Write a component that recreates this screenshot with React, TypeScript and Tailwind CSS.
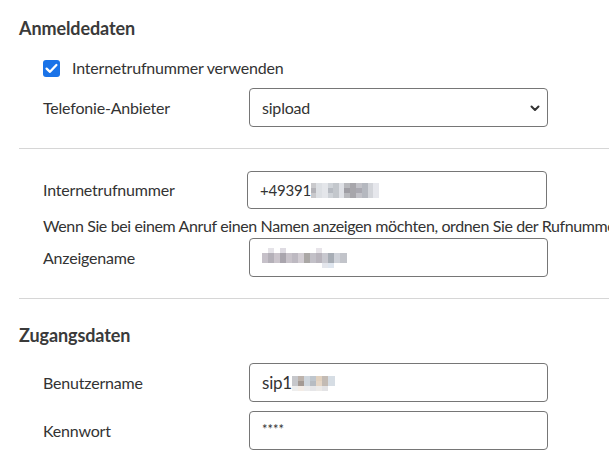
import React from "react";

type Block = [number, number, number, number, string];

function Mosaic({ w, h, cells }: { w: number; h: number; cells: Block[] }) {
  return (
    <svg width={w} height={h} viewBox={`0 0 ${w} ${h}`} className="block">
      {cells.map(([x, y, cw, ch, c], i) => (
        <rect key={i} x={x} y={y} width={cw} height={ch} fill={c} />
      ))}
    </svg>
  );
}

const phoneBlur: Block[] = [
  [0, 0, 5, 15, "#c9c9cc"],
  [5, 0, 6, 15, "#dde0e4"],
  [11, 0, 6, 15, "#e4e6ea"],
  [17, 0, 5, 15, "#cfd3d8"],
  [22, 0, 6, 15, "#c3c7cc"],
  [28, 0, 5, 15, "#dfe1e6"],
  [33, 0, 6, 15, "#b8b9bd"],
  [39, 0, 6, 15, "#a7a6ab"],
  [45, 0, 6, 15, "#c2c2c8"],
  [51, 0, 6, 15, "#b5b8bf"],
  [57, 0, 5, 15, "#d3d5da"],
  [62, 0, 6, 15, "#e6e7ec"],
  [0, 5, 5, 5, "#b3b3b8"],
  [17, 5, 5, 5, "#b7bbc2"],
  [33, 5, 6, 5, "#9f9ea4"],
  [45, 5, 6, 5, "#aaa9b1"],
];

const nameBlur: Block[] = [
  [0, 5, 6, 10, "#c6c1c9"],
  [6, 0, 6, 5, "#e5e3e8"],
  [6, 5, 6, 10, "#b4b0b8"],
  [12, 5, 6, 10, "#cbc5cc"],
  [18, 0, 6, 5, "#dedbe2"],
  [18, 5, 6, 10, "#a9a5ad"],
  [24, 5, 6, 10, "#c8c3ca"],
  [30, 5, 6, 10, "#bdb9c1"],
  [36, 5, 6, 10, "#d2cdd3"],
  [42, 5, 6, 10, "#aaa7a5"],
  [48, 5, 6, 10, "#c2c0c7"],
  [54, 0, 6, 5, "#e7e4e9"],
  [54, 5, 6, 10, "#b8b4bc"],
  [60, 5, 6, 10, "#c8c8cf"],
  [66, 5, 6, 10, "#a7adb5"],
  [72, 5, 6, 10, "#cfd2d9"],
  [78, 5, 7, 10, "#c2c4ca"],
  [60, 15, 6, 5, "#e4e6ec"],
  [66, 15, 6, 5, "#dfe6ef"],
];

const userBlur: Block[] = [
  [0, 0, 6, 10, "#c6c7cb"],
  [6, 0, 6, 5, "#bdb3ac"],
  [6, 5, 6, 5, "#a49a94"],
  [12, 0, 6, 10, "#cfd6dd"],
  [18, 0, 6, 5, "#bfc6cd"],
  [18, 5, 6, 5, "#b7bcc2"],
  [24, 0, 6, 5, "#e1d1bf"],
  [24, 5, 6, 5, "#e5d6c6"],
  [30, 0, 6, 10, "#c3bbb4"],
  [36, 0, 7, 10, "#d6dde4"],
  [0, 10, 6, 5, "#eeeeee"],
  [6, 10, 6, 5, "#f3ece6"],
  [12, 10, 6, 5, "#ececed"],
  [18, 10, 6, 5, "#e6e6e8"],
  [24, 10, 6, 5, "#eceae8"],
  [30, 10, 6, 5, "#e3e3e5"],
];

function Field({ children, left = 249, right = 548, h = 39 }: { children?: React.ReactNode; left?: number; right?: number; h?: number }) {
  return (
    <div
      className="absolute top-0 flex items-center rounded-[4px] border border-[#767676] bg-white pl-[12px]"
      style={{ left: left - 19, width: right - left, height: h }}
    >
      {children}
    </div>
  );
}

function Row({ label, children, h = 39, className = "" }: { label: string; children: React.ReactNode; h?: number; className?: string }) {
  return (
    <div className={`relative flex items-center ${className}`} style={{ height: h }}>
      <span className="pl-[24px] text-[#333]">{label}</span>
      {children}
    </div>
  );
}

export default function App() {
  return (
    <div
      className="relative h-[467px] w-[609px] overflow-hidden bg-white pl-[19px] text-[16px] leading-[20px] tracking-[-0.2px] text-[#333]"
      style={{ fontFamily: "Lato, 'Noto Sans', sans-serif" }}
    >
      <h2 className="mt-[16px] text-[18px] font-bold leading-[24px] tracking-[-0.1px] text-[#3a3a3a]">Anmeldedaten</h2>

      <div className="mt-[16px] flex h-[24px] items-center pl-[24px]">
        <div className="flex h-[17px] w-[17px] items-center justify-center rounded-[3px] bg-[#1a73e8]">
          <svg width="15" height="15" viewBox="0 0 15 15" fill="none">
            <path d="M2.6 7.6 L6 10.8 L12.4 4" stroke="#fff" strokeWidth="2.3" strokeLinecap="round" strokeLinejoin="round" />
          </svg>
        </div>
        <span className="ml-[12px]">Internetrufnummer verwenden</span>
      </div>

      <Row label="Telefonie-Anbieter" className="mt-[8px]">
        <Field>
          <span>sipload</span>
          <svg className="absolute right-[7px] top-[16px]" width="10" height="7" viewBox="0 0 10 7" fill="none">
            <path d="M1.5 1.5 L5 5 L8.5 1.5" stroke="#333" strokeWidth="2" strokeLinecap="round" strokeLinejoin="round" />
          </svg>
        </Field>
      </Row>

      <div className="mt-[21px] h-px w-[600px] bg-[#d6d6d6]" />

      <Row label="Internetrufnummer" className="mt-[22px]" h={38}>
        <Field left={247} right={547} h={38}>
          <span className="text-[15px]">+49391</span>
          <Mosaic w={68} h={15} cells={phoneBlur} />
        </Field>
      </Row>

      <p className="mt-[7px] whitespace-nowrap pl-[24px] tracking-[-0.38px]">
        Wenn Sie bei einem Anruf einen Namen anzeigen möchten, ordnen Sie der Rufnummer einen Namen zu.
      </p>

      <Row label="Anzeigename" className="mt-[2px]">
        <Field>
          <Mosaic w={85} h={20} cells={nameBlur} />
        </Field>
      </Row>

      <div className="mt-[21px] h-px w-[600px] bg-[#d6d6d6]" />

      <h2 className="mt-[24px] text-[18px] font-bold leading-[24px] tracking-[-0.1px] text-[#3a3a3a]">Zugangsdaten</h2>

      <Row label="Benutzername" className="mt-[16px]">
        <Field>
          <span className="text-[17px]">sip1</span>
          <div className="mt-[1px]">
            <Mosaic w={43} h={15} cells={userBlur} />
          </div>
        </Field>
      </Row>

      <Row label="Kennwort" className="mt-[9px]">
        <Field>
          <span className="-mt-[4px] text-[13px] tracking-[0px]">****</span>
        </Field>
      </Row>
    </div>
  );
}
